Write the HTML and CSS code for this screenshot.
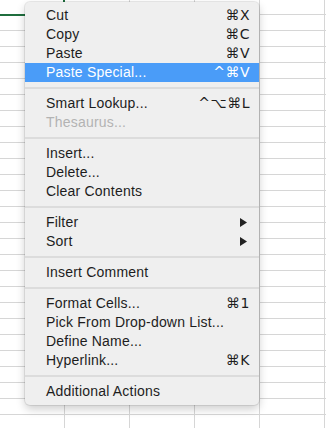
FILE: index.html
```html
<!DOCTYPE html>
<html lang="en">
<head>
  <meta charset="UTF-8">
  <title>Context Menu</title>
  <link rel="stylesheet" href="styles.css">
</head>
<body>
  <div class="sheet">
    <div class="selected-cell"></div>

    <div class="menu">
      <div class="item"><span>Cut</span><span class="key">⌘X</span></div>
      <div class="item"><span>Copy</span><span class="key">⌘C</span></div>
      <div class="item"><span>Paste</span><span class="key">⌘V</span></div>
      <div class="item active"><span>Paste Special...</span><span class="key">^⌘V</span></div>
      <div class="sep"></div>
      <div class="item"><span>Smart Lookup...</span><span class="key">^⌥⌘L</span></div>
      <div class="item disabled"><span>Thesaurus...</span></div>
      <div class="sep"></div>
      <div class="item"><span>Insert...</span></div>
      <div class="item"><span>Delete...</span></div>
      <div class="item"><span>Clear Contents</span></div>
      <div class="sep"></div>
      <div class="item"><span>Filter</span><svg class="arrow" width="7" height="9" viewBox="0 0 7 9"><path d="M0 0 L7 4.5 L0 9 Z"/></svg></div>
      <div class="item"><span>Sort</span><svg class="arrow" width="7" height="9" viewBox="0 0 7 9"><path d="M0 0 L7 4.5 L0 9 Z"/></svg></div>
      <div class="sep"></div>
      <div class="item"><span>Insert Comment</span></div>
      <div class="sep"></div>
      <div class="item"><span>Format Cells...</span><span class="key">⌘1</span></div>
      <div class="item"><span>Pick From Drop-down List...</span></div>
      <div class="item"><span>Define Name...</span></div>
      <div class="item"><span>Hyperlink...</span><span class="key">⌘K</span></div>
      <div class="sep"></div>
      <div class="item"><span>Additional Actions</span></div>
    </div>
  </div>
</body>
</html>
```

FILE: styles.css
```css
body {
  margin: 0;
  background: #fff;
  font-family: 'Liberation Sans', Arial, sans-serif;
}
.sheet {
  position: relative;
  width: 326px;
  height: 428px;
  overflow: hidden;
  background-image:
    linear-gradient(to bottom, #d6d6d6 1px, transparent 1px),
    linear-gradient(to right, #d6d6d6 1px, transparent 1px);
  background-size: 100% 16px, 65px 100%;
  background-position: 0 14px, 64px 0;
}
.selected-cell {
  position: absolute;
  left: -2px;
  top: -2px;
  width: 63px;
  height: 14px;
  border: 2px solid #1f6e3e;
}
.menu {
  position: absolute;
  left: 25px;
  top: 2px;
  width: 234px;
  padding: 4px 0;
  background: #efefef;
  border-radius: 5px;
  box-shadow: 0 0 0 1px rgba(0,0,0,0.08), 0 4px 10px rgba(0,0,0,0.2);
}
.item {
  display: flex;
  justify-content: space-between;
  align-items: center;
  height: 19px;
  padding: 0 9px 1px 21px;
  box-sizing: border-box;
  font-size: 14px;
  letter-spacing: 0.2px;
  color: #1d1d1d;
  white-space: nowrap;
}
.item.active {
  background: #4a9cf8;
  color: #fff;
}
.item.disabled {
  color: #b3b3b3;
}
.key {
  font-family: 'DejaVu Sans', sans-serif;
  font-size: 14px;
  letter-spacing: 0.5px;
}
.arrow {
  margin-right: 3px;
  fill: #222;
}
.sep {
  height: 2px;
  margin: 5px 0;
  background: #dcdcdc;
}
```
